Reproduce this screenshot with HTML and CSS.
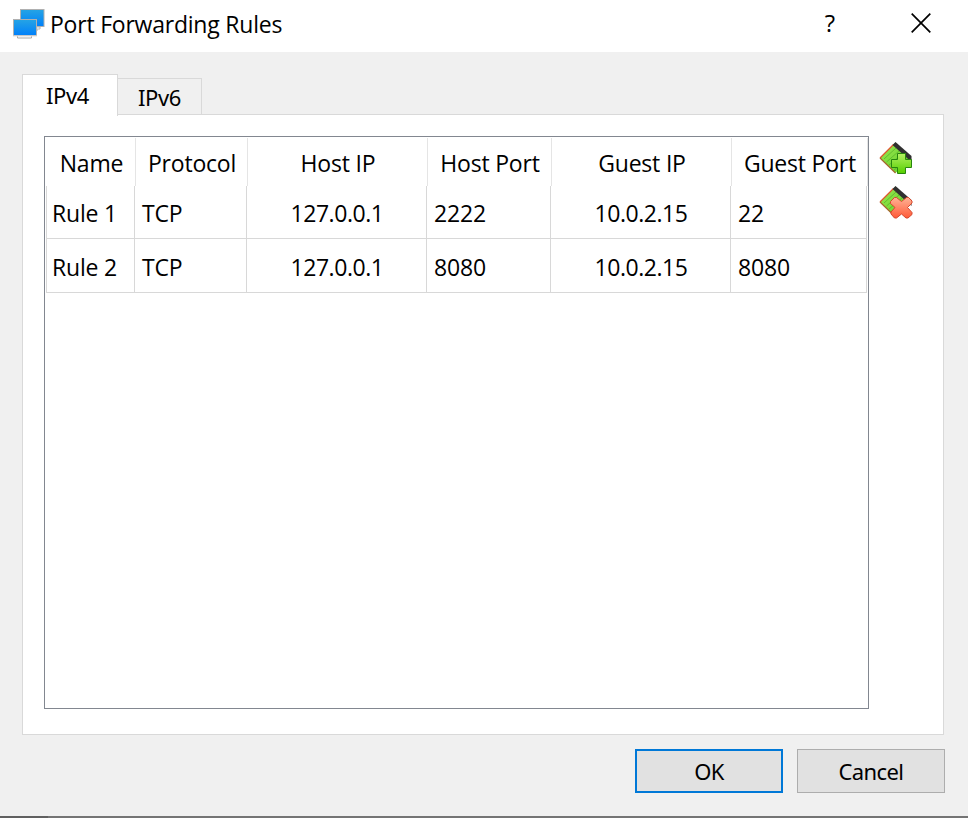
FILE: index.html
```html
<!DOCTYPE html>
<html lang="en">
<head>
<meta charset="utf-8">
<title>Port Forwarding Rules</title>
<link rel="stylesheet" href="styles.css">
</head>
<body>
<div class="window">
  <header class="titlebar">
    <svg class="app-icon" width="34" height="32" viewBox="0 0 34 32">
      <defs><linearGradient id="screen" x1="0" y1="0" x2="0" y2="1"><stop offset="0" stop-color="#26a4e4"/><stop offset="1" stop-color="#0080fa"/></linearGradient></defs>
      <path d="M13 19h15v2h-3v2H13z" fill="#fff" stroke="#b4b4b4"/>
      <rect x="8.500" y="1.500" width="23.500" height="17" fill="url(#screen)" stroke="#b0b0b0"/>
      <path d="M5.500 27h14v3h-14z" fill="#fff" stroke="#a8a8a8"/>
      <rect x="1.500" y="11.500" width="23" height="16" fill="url(#screen)" stroke="#b0b0b0"/>
      <path d="M1 28h24" stroke="#e0e0e0"/>
    </svg>
    <h1 class="title">Port Forwarding Rules</h1>
    <span class="help">?</span>
    <svg class="close" width="20" height="20" viewBox="0 0 20 20"><path d="M.7.7l18.600 18.600M19.300.7L.7 19.300" fill="none" stroke="#000" stroke-width="1.700"/></svg>
  </header>
  <main class="content">
    <nav class="tabs">
      <span class="tab tab-active">IPv4</span>
      <span class="tab">IPv6</span>
    </nav>
    <section class="panel">
      <div class="table">
        <div class="head">
          <span class="w-name">Name</span><span class="w-protocol">Protocol</span><span class="w-ip">Host IP</span><span class="w-port">Host Port</span><span class="w-ip">Guest IP</span><span class="w-guest">Guest Port</span>
        </div>
        <div class="rows">
          <div class="row first">
            <span class="rule">Rule 1</span><span>TCP</span><span class="ip">127.0.0.1</span><span class="num">2222</span><span class="ip">10.0.2.15</span><span class="num">22</span>
          </div>
          <div class="row">
            <span class="rule">Rule 2</span><span>TCP</span><span class="ip">127.0.0.1</span><span class="num">8080</span><span class="ip">10.0.2.15</span><span class="num">8080</span>
          </div>
        </div>
      </div>
      <div class="tools">
        <svg width="34" height="34" viewBox="0 0 34 34">
          <defs>
            <linearGradient id="leaf" x1="0" y1="0" x2="1" y2="1"><stop offset="0" stop-color="#9be854"/><stop offset="1" stop-color="#5fcc22"/></linearGradient>
            <linearGradient id="plus" x1="0" y1="0" x2="0" y2="1"><stop offset="0" stop-color="#b4f062"/><stop offset="1" stop-color="#55cf00"/></linearGradient>
            <linearGradient id="cross" x1="0" y1="0" x2="0" y2="1"><stop offset="0" stop-color="#ffb295"/><stop offset="1" stop-color="#ff5a38"/></linearGradient>
            <g id="card">
              <path d="M1 17L16.500 1.500 32 17 16.500 32z" fill="url(#leaf)"/>
              <path d="M5 18L17 7M7.500 21L20 10M10 24L23 13M13 27L26 16M15 29L28 18" stroke="#58b52a" stroke-width=".8" fill="none"/>
              <path d="M1 17L14.500 3.500" stroke="#e0552c" stroke-width="1.200"/>
              <path d="M1 17L16.500 32" stroke="#a6652c" stroke-width="1.200"/>
              <path d="M13.500 4L16.500 1l16 14v6z" fill="#303030"/>
            </g>
          </defs>
          <use href="#card"/>
          <path d="M18.500 12.500h8v6h6v8h-6v6h-8v-6h-6v-8h6z" fill="url(#plus)" stroke="#28860e"/>
        </svg>
        <svg width="34" height="34" viewBox="0 0 34 34">
          <use href="#card"/>
          <path d="M11.500 16.500l4-4h2l5 4 5-4h2l3.500 3.500v2l-4.500 4.500 4.500 5v2l-4 3.500h-2l-4.500-4-5 4h-2l-3.500-4v-2l4-4.500-4.500-4z" fill="url(#cross)" stroke="#d5472c"/>
        </svg>
      </div>
    </section>
  </main>
  <footer class="actions">
    <button class="button button-default">OK</button>
    <button class="button button-cancel">Cancel</button>
  </footer>
  <div class="edge"></div>
</div>
</body>
</html>
```

FILE: styles.css
```css
* { box-sizing: border-box; }
body { margin: 0; background: #f0f0f0; color: #000; font: 23px/30px "Open Sans", sans-serif; overflow: hidden; }
.window { width: 968px; height: 818px; display: flex; flex-direction: column; background: #f0f0f0; }
.titlebar { height: 52px; flex: none; display: flex; padding: 8px 37px 0 12px; background: #fff; }
.app-icon { flex: none; }
.title { margin: 1px 0 0 4px; font-size: 23px; font-weight: 400; line-height: 30px; letter-spacing: -.22px; white-space: nowrap; flex: 1; }
.help { width: 14px; margin: 0 74px 0 0; font-size: 24px; font-weight: 500; text-align: center; }
.close { margin-top: 5px; flex: none; }
.content { padding: 22px 24px 0 22px; }
.tabs { height: 41px; display: flex; align-items: flex-start; font: 22px/30px "Noto Sans", sans-serif; letter-spacing: -.4px; }
.tab { width: 84px; height: 37px; margin-top: 4px; padding: 3px 0 0 20px; border: 1px solid #d9d9d9; border-left: 0; border-bottom: 0; }
.tab-active { position: relative; width: 96px; height: 42px; margin-top: 0; padding: 5px 0 0 23px; border-left: 1px solid #d9d9d9; background: #fff; }
.panel { width: 922px; height: 621px; margin-top: -1px; padding: 21px 0 0 21px; display: flex; border: 1px solid #d9d9d9; background: #fff; }
.table { width: 825px; height: 573px; padding: 1px 0 0 1px; border: 1px solid #828790; flex: none; }
.head { height: 48px; display: flex; padding-left: 1px; text-align: center; white-space: nowrap; letter-spacing: -.2px; }
.head span { padding: 10px 0 0 1px; border-right: 1px solid #e5e5e5; flex: none; }
.w-name { width: 89px; }
.w-protocol { width: 112px; }
.w-ip { width: 180px; }
.w-port { width: 124px; }
.w-guest { width: 136px; }
.rows { width: 821px; border-left: 1px solid #d8d8d8; }
.row { height: 54px; display: grid; grid-template-columns: 88px 112px 180px 124px 180px 136px; white-space: nowrap; }
.row.first { height: 53px; }
.row span { padding: 13px 0 0 7px; border-right: 1px solid #d8d8d8; border-bottom: 1px solid #d8d8d8; letter-spacing: -.2px; }
.row.first span { padding-top: 12px; }
.row .rule { padding-left: 5px; }
.row .ip { padding-left: 1px; text-align: center; letter-spacing: -.45px; }
.row .num { letter-spacing: -.15px; }
.tools { display: flex; flex-direction: column; gap: 10px; margin: 5px 0 0 10px; }
.actions { display: flex; justify-content: flex-end; gap: 14px; padding: 14px 23px 0 0; }
.button { width: 148px; height: 44px; padding: 0; border: 1px solid #adadad; border-radius: 0; background: #e1e1e1; color: #000; font: 22px/30px "Noto Sans", sans-serif; letter-spacing: -.6px; }
.button-default { border: 2px solid #0078d7; }
.edge { height: 2px; margin-top: auto; background: linear-gradient(90deg, #606060 48px, #747474 48px); }
```
